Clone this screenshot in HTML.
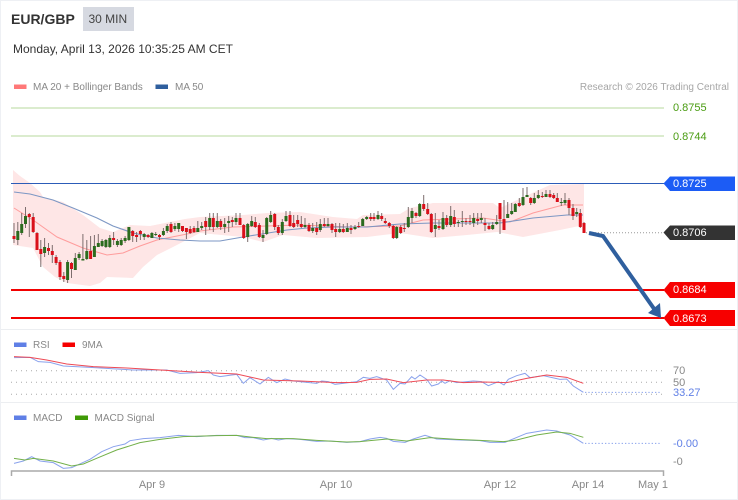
<!DOCTYPE html>
<html><head><meta charset="utf-8"><title>EUR/GBP</title>
<style>
html,body{margin:0;padding:0;background:#fff;width:738px;height:500px;overflow:hidden}
svg{display:block;font-family:"Liberation Sans",sans-serif}
</style></head><body>
<svg width="738" height="500" viewBox="0 0 738 500" xmlns="http://www.w3.org/2000/svg">
<rect x="0.5" y="0.5" width="737" height="499" fill="#fff" stroke="#eef0f4"/>
<rect x="83" y="7" width="51" height="24" fill="#d6d9e1"/>
<text x="11" y="24" font-size="14" font-weight="700" fill="#333">EUR/GBP</text>
<text x="88.500" y="23" font-size="12" fill="#444">30 MIN</text>
<text x="13" y="53" font-size="12" fill="#333">Monday, April 13, 2026 10:35:25 AM CET</text>
<rect x="14" y="84.500" width="12.500" height="4.500" fill="#ff7878"/>
<text x="33" y="90" font-size="10" fill="#888">MA 20 + Bollinger Bands</text>
<rect x="155.500" y="84.500" width="12.500" height="4.500" fill="#2f5f9e"/>
<text x="175" y="90" font-size="10" fill="#888">MA 50</text>
<text x="729" y="90" font-size="10" fill="#a6a6a6" text-anchor="end">Research © 2026 Trading Central</text>

<path d="M11 108H664M11 136H664" stroke="#cfe6bd" stroke-width="1.500" fill="none"/>
<path d="M13 170L20 176L30 183L40 192L43 197L63 202L83 215L100 228L113 232L130 225L150 226L170 222L185 219L200 217L243 215L267 213L300 212L333 217L357 219L363 215L400 214L410 208L433 203L493 203L500 208L517 200L550 185L584 184V225L560 230L523 237L497 232L467 235L433 238L400 233L367 237L317 238L283 235L263 242L243 237L200 233L173 247L157 255L143 267L133 278L107 277L100 283L90 286L67 283L55 277L43 267L33 248L13 245Z" fill="#fee6e6"/>
<path d="M14 208L33 220L57 237L83 248L107 255L123 253L140 246L157 240L187 234L200 231L233 227L300 225L350 227L400 226L423 220L483 218L510 222L533 213L563 205L583 205" fill="none" stroke="#ff9c9c" stroke-width="1"/>
<path d="M14 192L30 194L53 200L73 208L97 218L113 226L133 233L157 238L180 240L200 241L220 241L243 237L287 230L307 228L333 227L367 227L400 224L433 223L500 223L533 218L567 215L583 215" fill="none" stroke="#7c97c4" stroke-width="1.100"/>
<path d="M11 183.500H664" stroke="#2c5cb8" stroke-width="1" fill="none"/>
<path d="M11 290H664M11 318H664" stroke="#f20000" stroke-width="2" fill="none"/>
<path d="M586 232.700H664" stroke="#999" stroke-width="1" stroke-dasharray="1 2" fill="none"/>

<path fill="none" stroke="#7d6d6d" stroke-width="1" d="M14 223V243M17.800 222V245M21.700 213V235M25.500 207V228M29.300 213V237M33.200 213V233M37 232V250M40.800 240V267M44.600 238V257M48.500 243V255M52.300 245V263M56.100 255V265M60 260V280M63.800 272V282M67.600 260V283M71.500 262V278M75.300 253V270M79.100 252V260M82.900 234V260M86.800 240V260M90.600 236V259M94.400 235V257M98.300 234V247M102.100 239V247M105.900 239V248M109.800 235V248M113.600 232V245M117.400 239V247M121.200 238V246M125.100 236V243M128.900 227V241M132.700 230V242M136.600 232V242M140.400 230V240M144.200 233V240M148.100 234V238M151.900 232V238M155.700 232V236M159.500 234V240M163.400 228V236M167.200 224V233M171 222V233M174.900 223V231M178.700 223V232M182.500 226V232M186.400 228V239M190.200 226V234M194 226V233M197.800 221V232M201.700 222V230M205.700 217V235M209.700 213V230M213.300 213V232M217.300 213V228M220.700 219V230M224.700 218V233M228.700 216V232M232.300 217V227M236 213V225M240 213V225M243.700 224V239M247.700 223V242M251.700 216V227M255.300 217V228M259.300 223V238M263 230V242M266.700 217V235M270.700 211V223M274.700 213V230M278.300 225V235M282.300 219V235M286 211V222M290 211V227M293.700 215V228M297.700 215V227M301.300 216V228M305 218V228M309 223V232M312.700 223V233M316.700 222V235M320.300 219V232M324.300 218V227M328 218V227M332 223V233M335.700 223V237M339.700 223V233M343.300 224V233M347.300 223V232M351 225V234M355 225V230M358.700 222V228M362.700 218V226M366.700 216V220M370.700 213V221M374 213V221M378 211V220M381.700 213V221M385.300 218V224M389.300 222V228M393.300 225V239M396.700 226V239M400.700 225V234M404.300 223V232M408.300 207V228M412 208V223M416 212V218M419.700 203V217M423.700 195V211M427.700 203V215M431.300 213V233M435.300 213V237M439 220V230M443 212V230M446.700 215V227M450.700 206V227M454.300 210V227M458.300 220V227M462.300 211V227M466 218V225M470 215V225M473.700 213V227M477.700 213V225M481.300 213V223M485 218V231M489 223V230M492.700 222V230M496.700 215V225M500 203V234M504 200V230M507.700 202V218M511.700 203V215M515.300 203V212M519.300 198V207M523 188V206M527 187V197M530.700 197V205M534.300 193V204M538.300 190V199M542.300 192V198M546 190V197M550 190V198M553.700 193V199M557.300 193V202M561.300 198V206M565 193V205M569 198V215M573 204V220M576.700 208V217M580.300 209V228M584 222V233"/>
<path fill="none" stroke="#2b6b1e" stroke-width="3" d="M17.800 231V240M21.700 224V233M25.500 216V224M44.600 247V253M67.600 262V280M75.300 258V270M79.100 254V258M82.900 259V260.500M86.800 251V259M94.400 246V257M98.300 243V247M102.100 241V246M105.900 240V247M109.800 238V247M117.400 241V245M121.200 240V245M125.100 238V241M128.900 227V240M144.200 234V237M151.900 233V238M155.700 234V235M163.400 231V235M167.200 226V231M174.900 226V229M178.700 223V229M197.800 228V232M201.700 226V228M209.700 218V227M217.300 221V227M224.700 224V227M228.700 221V223M236 218V222M247.700 224V237M251.700 221V226M263 235V238M266.700 218V234M270.700 215V222M282.300 222V233M286 216V221M305 225V227M312.700 228V231M320.300 224V230M328 224V226M339.700 229V232M347.300 228V232M355 227V229M362.700 219V226M366.700 217V219M378 215V219M396.700 227V238M408.300 217V227M412 211V218M419.700 204V216M435.300 225V229M443 218V229M450.700 216V225M458.300 222V223M462.300 221V222M473.700 218V223M481.300 218V220M492.700 225V229M496.700 222V224M507.700 214V218M511.700 211V214M515.300 204V212M523 197V205M527 195V197M534.300 198V203M538.300 195V198M546 194V197M561.300 202V203M565 200V203M576.700 212V214"/>
<path fill="none" stroke="#d9101a" stroke-width="3" d="M14 236V239M29.300 214V217M33.200 217V232M37 233V250M40.800 249V254M48.500 248V251M52.300 251V255M56.100 257V263M60 262V277M63.800 276V279M71.500 263V269M90.600 251V259M113.600 238V240M132.700 231V236M136.600 235V237M140.400 231V234M148.100 235V237M159.500 235V237M171 224V232M182.500 226V231M186.400 228V232M190.200 229V233M194 228V232M205.700 221V227M213.300 218V227M220.700 221V227M232.300 220V222M240 218V225M243.700 225V238M255.300 222V227M259.300 225V237M274.700 214V227M278.300 227V233M290 215V226M293.700 223V227M297.700 220V224M301.300 224V227M309 225V231M316.700 228V232M324.300 224V226M332 224V230M335.700 229V232M343.300 229V232M351 228V230M358.700 226V227M370.700 217V219M374 217V219M381.700 216V219M385.300 221V223M389.300 223V226M393.300 226V238M400.700 227V233M404.300 228V229M416 213V216M423.700 204V209M427.700 209V214M431.300 214V232M439 226V228M446.700 218V225M454.300 217V224M466 221V222M470 221V222M477.700 219V221M485 223V225M489 226V229M500 203V219M504 219V230M519.300 203V206M530.700 198V203M542.300 196V197M550 194V197M553.700 195V198M557.300 198V202M569 200V208M573 208V216M580.300 213V227M584 223V233"/>

<path d="M589 233L603 236L657 313" fill="none" stroke="#2f5f9e" stroke-width="4"/>
<path d="M661 318L648 313L660 303Z" fill="#2f5f9e"/>

<path d="M663.500 183.500L670 176.500H735V191H670Z" fill="#1c5cf5"/>
<path d="M663.500 232.500L670 225.500H735V240H670Z" fill="#333"/>
<path d="M663.500 290L670 282H735V298H670Z" fill="#f70000"/>
<path d="M663.500 318L670 310H735V326H670Z" fill="#f70000"/>
<g font-size="11">
<text x="673" y="111" fill="#4a9c12">0.8755</text>
<text x="673" y="140" fill="#4a9c12">0.8744</text>
<text x="673" y="187" fill="#fff">0.8725</text>
<text x="673" y="236" fill="#fff">0.8706</text>
<text x="673" y="293" fill="#fff">0.8684</text>
<text x="673" y="322" fill="#fff">0.8673</text>
</g>

<path d="M1 329.500H737M1 402.500H737" stroke="#eceef1" stroke-width="1" fill="none"/>

<rect x="14" y="342.500" width="12.500" height="4.500" fill="#5f7fe6"/>
<text x="33" y="348" font-size="10" fill="#888">RSI</text>
<rect x="62.500" y="342.500" width="12.500" height="4.500" fill="#f60000"/>
<text x="82" y="348" font-size="10" fill="#888">9MA</text>
<path d="M11 370.700H664M11 382.300H664M11 394.300H664" stroke="#aaa" stroke-width="1" stroke-dasharray="1 4" fill="none"/>

<g transform="translate(0,330) scale(0.33333)" fill="none" stroke-width="3">
<path stroke="#8aa2ec" d="M42 83L90 82L115 95L150 97L190 108L270 112L350 117L400 120L500 120L540 130L590 128L625 122L640 135L660 140L710 133L730 160L750 143L780 162L805 142L830 158L855 147L880 153L950 160L965 153L985 155L1005 163L1070 155L1090 142L1110 145L1130 140L1160 150L1180 178L1200 160L1215 162L1235 140L1245 147L1260 135L1280 148L1295 168L1315 162L1325 153L1335 160L1350 152L1370 158L1420 153L1445 155L1465 167L1495 155L1512 165L1525 148L1550 137L1575 130L1590 143L1630 137L1680 148L1700 147L1720 168L1750 187"/>
<path stroke="#ee4a55" d="M42 80L90 82L140 90L200 102L280 110L380 114L500 121L600 127L710 132L790 150L900 153L1010 158L1070 157L1110 148L1160 147L1210 158L1280 150L1330 150L1390 158L1450 156L1520 158L1580 145L1640 135L1700 142L1750 160"/>
<path stroke="#8aa2ec" stroke-dasharray="4 6" d="M1755 187H1985"/>
</g>
<text x="673" y="374" font-size="11" fill="#888">70</text>
<text x="673" y="386" font-size="11" fill="#888">50</text>
<text x="673" y="396" font-size="11" fill="#5f7fe6">33.27</text>

<rect x="14" y="415.500" width="12.500" height="4.500" fill="#5f7fe6"/>
<text x="33" y="421" font-size="10" fill="#888">MACD</text>
<rect x="75" y="415.500" width="13" height="4.500" fill="#3f9a06"/>
<text x="94.500" y="421" font-size="10" fill="#888">MACD Signal</text>

<g transform="translate(0,330) scale(0.33333)" fill="none" stroke-width="3">
<path stroke="#8aa2ec" d="M42 400L70 393L95 380L120 393L160 398L190 415L215 413L270 388L305 365L340 350L375 342L390 332L430 326L480 323L535 316L590 320L650 316L710 316L735 323L760 323L790 330L815 325L835 330L860 326L900 328L950 334L990 333L1040 337L1080 335L1110 327L1140 322L1160 325L1180 334L1215 337L1240 327L1275 316L1310 327L1380 330L1440 332L1470 337L1515 337L1580 310L1640 300L1670 303L1710 315L1750 340"/>
<path stroke="#73b04a" d="M42 385L75 390L100 385L160 393L215 408L250 402L290 385L350 360L420 338L480 328L550 320L650 317L710 316L760 322L800 326L880 326L950 331L1040 336L1080 335L1110 332L1160 327L1220 333L1290 323L1370 328L1440 331L1510 335L1550 330L1610 315L1670 306L1710 310L1750 322"/>
<path stroke="#8aa2ec" stroke-dasharray="4 6" d="M1755 340H1985"/>
</g>
<text x="673" y="447" font-size="11" fill="#5f7fe6">-0.00</text>
<text x="673" y="465" font-size="11" fill="#888">-0</text>

<path d="M11.500 476V471H663.500V476" fill="none" stroke="#aaa" stroke-width="1.500"/>
<g font-size="11" fill="#888" text-anchor="middle">
<text x="152" y="488">Apr 9</text>
<text x="336" y="488">Apr 10</text>
<text x="500" y="488">Apr 12</text>
<text x="588" y="488">Apr 14</text>
<text x="653" y="488">May 1</text>
</g>
</svg>
</body></html>
